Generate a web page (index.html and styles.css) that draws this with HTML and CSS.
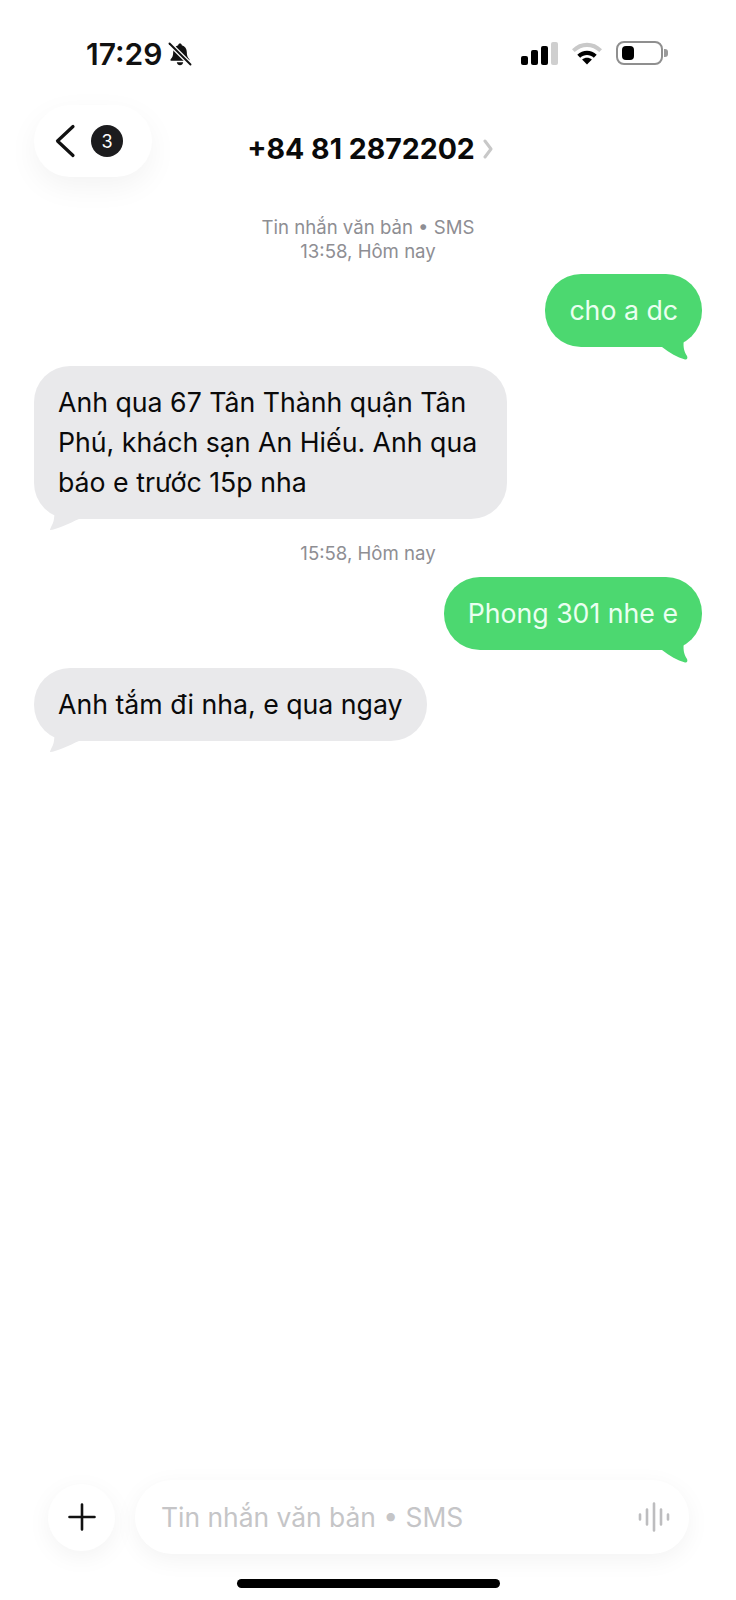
FILE: index.html
```html
<!DOCTYPE html>
<html lang="vi">
<head>
  <meta charset="UTF-8" />
  <meta name="viewport" content="width=device-width, initial-scale=1.0"/>
  <title>+84 81 2872202</title>
  <link rel="stylesheet" href="styles.css">
</head>
<body>
  <div class="phone">

    <div class="status">
      <div class="status-left">
        <span class="clock">17:29</span>
        <svg class="bell" width="24" height="24" viewBox="0 0 24 24">
          <path d="M12 1.5c-1 0-1.7.7-1.8 1.7C7 4 5.2 6.700 5.200 10c0 3.500-.7 5.500-2.500 7.200-.6.6-.2 1.600.7 1.600h17.200c.9 0 1.300-1 .7-1.600-1.800-1.700-2.500-3.700-2.500-7.200 0-3.300-1.800-6-5-6.800-.1-1-.8-1.700-1.800-1.700z" fill="#111"/>
          <path d="M8.800 20.300h6.400c-.3 1.800-1.600 2.900-3.200 2.900s-2.900-1.100-3.200-2.900z" fill="#111"/>
          <path d="M1.500 1.500l21 21" stroke="#fff" stroke-width="4.600"/>
          <path d="M1.500 1.500l21 21" stroke="#111" stroke-width="1.900" stroke-linecap="round"/>
        </svg>
      </div>
      <div class="status-right">
        <div class="signal">
          <span class="sig s1"></span>
          <span class="sig s2"></span>
          <span class="sig s3"></span>
          <span class="sig s4"></span>
        </div>
        <svg class="wifi" width="32" height="24" viewBox="0 0 32 24">
          <path d="M1 8.200C9.500 -.4 22.500 -.4 31 8.200l-2.700 2.900C21.300 4.200 10.700 4.200 3.700 11.100z" fill="#c9c9c9"/>
          <path d="M6.300 13.700c5.500-5.300 13.900-5.300 19.400 0l-2.900 3c-3.900-3.600-9.700-3.600-13.600 0z" fill="#000"/>
          <path d="M11.100 18.600c2.900-2.500 6.900-2.500 9.800 0L16 23.500z" fill="#000"/>
        </svg>
        <div class="battery">
          <div class="battery-body"><span class="battery-fill"></span></div>
          <span class="battery-nub"></span>
        </div>
      </div>
    </div>

    <div class="header">
      <div class="back-pill">
        <svg width="24" height="34" viewBox="0 0 24 34">
          <path d="M20 2.500L4.500 17 20 31.500" fill="none" stroke="#111" stroke-width="3.200" stroke-linecap="round" stroke-linejoin="round"/>
        </svg>
        <span class="badge">3</span>
      </div>
      <div class="contact">
        <span class="contact-num">+84 81 2872202</span>
        <svg width="10" height="20" viewBox="0 0 10 20">
          <path d="M2 2l6 8-6 8" fill="none" stroke="#c8c8c8" stroke-width="3" stroke-linecap="round" stroke-linejoin="round"/>
        </svg>
      </div>
    </div>

    <div class="thread">
      <div class="meta meta-first">Tin nhắn văn bản • SMS<br>13:58, Hôm nay</div>

      <div class="bubble sent msg-a">
        cho a dc
        <svg class="tail tail-sent" width="26" height="22" viewBox="0 0 26 22">
          <path d="M0 0h22c-1 6-.5 12 3 17 1 2 0 4-2 3.500C15 18.500 8 14 0 8z" fill="#4cd870"/>
        </svg>
      </div>

      <div class="bubble received msg-b">
        Anh qua 67 Tân Thành quận Tân Phú, khách sạn An Hiếu. Anh qua báo e trước 15p nha
        <svg class="tail tail-received" width="30" height="22" viewBox="0 0 30 22">
          <path d="M30 0H6c-1 5-.5 10-3 14-1 2-2 4-2 5 6 0 20-7 29-11z" fill="#e9e9eb"/>
        </svg>
      </div>

      <div class="meta meta-mid">15:58, Hôm nay</div>

      <div class="bubble sent msg-c">
        Phong 301 nhe e
        <svg class="tail tail-sent" width="26" height="22" viewBox="0 0 26 22">
          <path d="M0 0h22c-1 6-.5 12 3 17 1 2 0 4-2 3.500C15 18.500 8 14 0 8z" fill="#4cd870"/>
        </svg>
      </div>

      <div class="bubble received msg-d">
        Anh tắm đi nha, e qua ngay
        <svg class="tail tail-received" width="30" height="22" viewBox="0 0 30 22">
          <path d="M30 0H6c-1 5-.5 10-3 14-1 2-2 4-2 5 6 0 20-7 29-11z" fill="#e9e9eb"/>
        </svg>
      </div>
    </div>

    <div class="composer">
      <div class="plus-btn">
        <svg width="28" height="28" viewBox="0 0 28 28">
          <path d="M14 1.500v25M1.500 14h25" stroke="#111" stroke-width="2.600" stroke-linecap="round"/>
        </svg>
      </div>
      <div class="input-box">
        <span class="placeholder">Tin nhắn văn bản • SMS</span>
        <svg width="32" height="30" viewBox="0 0 32 30">
          <path d="M2 12.500v5M9 7.500v15M16 1.500v27M23 7.500v15M30 12.500v5" stroke="#bdbdbf" stroke-width="2.600" stroke-linecap="round"/>
        </svg>
      </div>
    </div>

    <div class="home-row"><span class="home-bar"></span></div>
  </div>
</body>
</html>
```

FILE: styles.css
```css
* {
  box-sizing: border-box;
}

body {
  margin: 0;
  background: #fff;
  color: #0a0a0a;
  font-family: Inter, "Liberation Sans", sans-serif;
}

.phone {
  width: 736px;
  height: 1600px;
  display: flex;
  flex-direction: column;
  overflow: hidden;
}

/* status bar */
.status {
  height: 105px;
  padding: 38px 68px 0 86px;
  display: flex;
  justify-content: space-between;
  align-items: flex-start;
}

.status-left {
  display: flex;
  align-items: center;
  gap: 6px;
}

.clock {
  font-size: 30px;
  line-height: 32px;
  font-weight: 600;
  color: #111;
}

.status-right {
  display: flex;
  align-items: center;
  gap: 13px;
  padding-top: 3px;
}

.signal {
  display: flex;
  align-items: flex-end;
  gap: 3px;
  height: 23px;
}

.sig {
  width: 7px;
  background: #000;
  border-radius: 2px;
}

.s1 { height: 9px; }
.s2 { height: 15px; }
.s3 { height: 19px; }
.s4 { height: 23px; background: #cfcfcf; }

.battery {
  display: flex;
  align-items: center;
  gap: 1px;
}

.battery-body {
  width: 47px;
  height: 24px;
  border: 2px solid #8f8f8f;
  border-radius: 8px;
  padding: 3px 4px;
}

.battery-fill {
  display: block;
  width: 12px;
  height: 14px;
  background: #000;
  border-radius: 4px;
}

.battery-nub {
  width: 4px;
  height: 8px;
  background: #9a9a9a;
  border-radius: 0 3px 3px 0;
}

/* header */
.header {
  position: relative;
  height: 72px;
  padding-left: 34px;
}

.back-pill {
  width: 118px;
  height: 72px;
  background: #fff;
  border-radius: 36px;
  box-shadow: 0 10px 30px rgba(0, 0, 0, 0.05);
  display: flex;
  align-items: center;
  gap: 14px;
  padding-left: 19px;
}

.badge {
  width: 32px;
  height: 32px;
  background: #1c1c1e;
  color: #fff;
  border-radius: 50%;
  font-size: 18px;
  display: flex;
  align-items: center;
  justify-content: center;
}

.contact {
  position: absolute;
  top: 26px;
  left: 0;
  right: 0;
  display: flex;
  justify-content: center;
  align-items: center;
  gap: 8px;
  padding-left: 4px;
}

.contact-num {
  font-size: 28.500px;
  line-height: 36px;
  font-weight: 700;
  color: #0a0a0a;
}

/* messages */
.thread {
  flex: 1;
  padding: 38px 34px 0;
  display: flex;
  flex-direction: column;
}

.meta {
  text-align: center;
  font-size: 18.600px;
  line-height: 24px;
  color: #8e8e93;
}

.bubble {
  position: relative;
  font-size: 26.700px;
  line-height: 40px;
  padding: 16px 24px 17px;
  border-radius: 36px;
  max-width: 473px;
}

.sent {
  align-self: flex-end;
  background: #4cd870;
  color: #eafff0;
}

.received {
  align-self: flex-start;
  background: #e9e9eb;
  color: #0a0a0a;
}

.tail {
  position: absolute;
  top: 100%;
  margin-top: -8px;
}

.tail-sent {
  right: 14px;
}

.tail-received {
  left: 15px;
}

.msg-a { margin-top: 11px; }
.msg-b { margin-top: 19px; }
.meta-mid { margin-top: 22px; }
.msg-c { margin-top: 12px; }
.msg-d { margin-top: 18px; }

/* composer */
.composer {
  display: flex;
  align-items: center;
  gap: 20px;
  padding: 0 47px 0 48px;
  margin-bottom: 25px;
}

.plus-btn {
  width: 67px;
  height: 67px;
  flex-shrink: 0;
  background: #fff;
  border-radius: 50%;
  box-shadow: 0 6px 24px rgba(0, 0, 0, 0.05);
  display: flex;
  align-items: center;
  justify-content: center;
}

.input-box {
  flex: 1;
  height: 74px;
  background: #fff;
  border-radius: 37px;
  box-shadow: 0 6px 24px rgba(0, 0, 0, 0.05);
  display: flex;
  align-items: center;
  justify-content: space-between;
  padding: 0 19px 0 26px;
}

.placeholder {
  font-size: 26.400px;
  color: #c5c5c7;
}

.home-row {
  height: 21px;
  display: flex;
  justify-content: center;
}

.home-bar {
  width: 263px;
  height: 9px;
  background: #000;
  border-radius: 5px;
}
```
